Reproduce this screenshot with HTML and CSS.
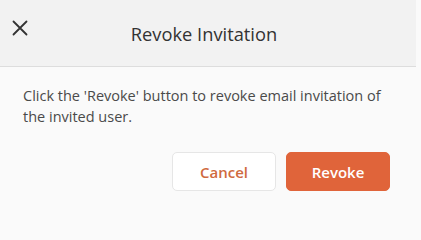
FILE: index.html
```html
<!DOCTYPE html>
<html lang="en">
<head>
<meta charset="utf-8">
<title>Revoke Invitation</title>
<link rel="stylesheet" href="styles.css">
</head>
<body>
<div class="modal">
  <header class="modal-header">
    <button class="close-btn" aria-label="Close">
      <svg width="16" height="16" viewBox="0 0 16 16"><path d="M1.5 1.5 L14.5 14.5 M14.5 1.5 L1.5 14.5" stroke="#333" stroke-width="1.8" stroke-linecap="round" fill="none"/></svg>
    </button>
    <h1 class="modal-title">Revoke Invitation</h1>
    <span></span>
  </header>
  <div class="modal-body">
    <p class="message">Click the 'Revoke' button to revoke email invitation of the invited user.</p>
    <div class="actions">
      <button class="btn btn-secondary">Cancel</button>
      <button class="btn btn-primary">Revoke</button>
    </div>
  </div>
</div>
</body>
</html>
```
FILE: styles.css
```css
* { box-sizing: border-box; }
html, body {
  margin: 0;
  padding: 0;
  background: #fafafa;
  font-family: "Open Sans", "Noto Sans", sans-serif;
}
.modal {
  width: 421px;
  height: 213px;
}
.modal-header {
  display: grid;
  grid-template-columns: 40px 1fr 48px;
  align-items: center;
  height: 67px;
  background: #f2f2f2;
  border-bottom: 1px solid #dddddd;
  margin-right: 5px;
}
.close-btn {
  align-self: start;
  margin-top: 20px;
  margin-left: 12px;
  width: 16px;
  height: 16px;
  padding: 0;
  border: 0;
  background: none;
  display: block;
}
.close-btn svg { display: block; }
.modal-title {
  margin: 0;
  text-align: center;
  font-size: 18.3px;
  font-weight: 500;
  color: #333;
}
.modal-body {
  padding: 18px 31px 0 23px;
}
.message {
  margin: 0;
  font-size: 14.5px;
  line-height: 21px;
  color: #4a4a4a;
}
.actions {
  display: flex;
  justify-content: flex-end;
  gap: 10px;
  margin-top: 25px;
}
.btn {
  width: 104px;
  height: 39px;
  border-radius: 5px;
  font-family: inherit;
  font-size: 15px;
  font-weight: 600;
  cursor: pointer;
}
.btn-secondary {
  background: #ffffff;
  border: 1px solid #e6e6e6;
  color: #cf6a3e;
}
.btn-primary {
  background: #e0643a;
  border: 1px solid #e0643a;
  color: #ffffff;
}
```
